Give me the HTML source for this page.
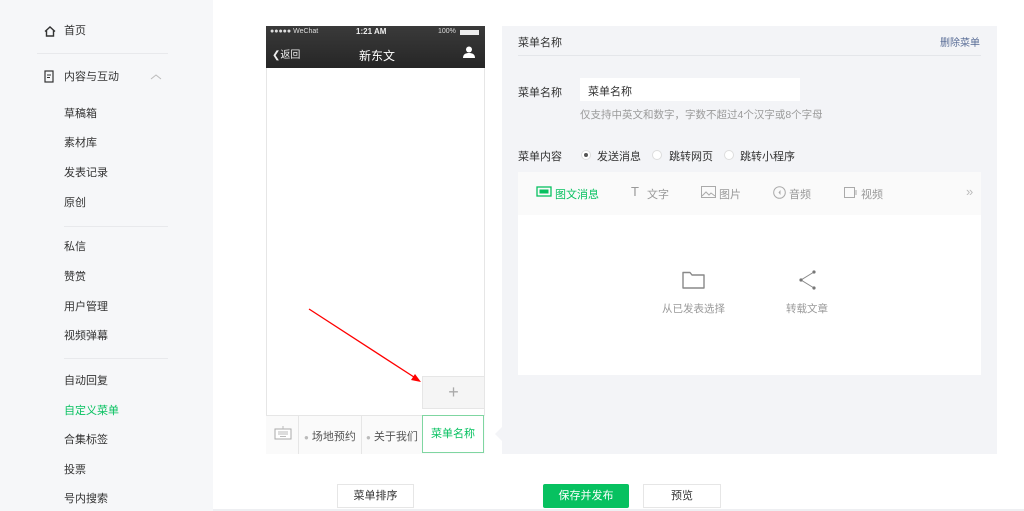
<!DOCTYPE html>
<html><head><meta charset="utf-8"><style>
*{margin:0;padding:0;box-sizing:border-box}
body{width:1024px;height:511px;overflow:hidden;background:#fff;font-family:"Liberation Sans","Noto Sans CJK SC",sans-serif;font-size:11px;color:#333;position:relative}
.a{position:absolute}
.side{left:0;top:0;width:213px;height:511px;background:#f6f7f9}
.si{left:64px;font-size:11px;color:#333;line-height:14px}
.dv{height:1px;background:#e8e9ec}
.gray{color:#9a9a9a}
</style></head><body>
<div class="a side"></div>
<svg class="a" style="left:43px;top:25px" width="14" height="13" viewBox="0 0 14 13"><path d="M2 6.5L7 2l5 4.5M3.5 5.5V11h7V5.5" fill="none" stroke="#333" stroke-width="1.4"/></svg>
<div class="a si" style="top:24px">首页</div>
<div class="a dv" style="left:37px;top:53px;width:131px"></div>
<svg class="a" style="left:44px;top:70px" width="10" height="13"><rect x="1" y="1" width="8" height="11" fill="none" stroke="#333" stroke-width="1.2"/><path d="M3 5h4M3 7.5h3" stroke="#333"/></svg>
<div class="a si" style="top:70px">内容与互动</div>
<svg class="a" style="left:150px;top:73px" width="12" height="8"><path d="M1 6l5-4 5 4" fill="none" stroke="#bbb"/></svg>
<div class="a si" style="top:107px">草稿箱</div>
<div class="a si" style="top:136px">素材库</div>
<div class="a si" style="top:166px">发表记录</div>
<div class="a si" style="top:196px">原创</div>
<div class="a dv" style="left:64px;top:226px;width:104px"></div>
<div class="a si" style="top:240px">私信</div>
<div class="a si" style="top:270px">赞赏</div>
<div class="a si" style="top:300px">用户管理</div>
<div class="a si" style="top:329px">视频弹幕</div>
<div class="a dv" style="left:64px;top:358px;width:104px"></div>
<div class="a si" style="top:374px">自动回复</div>
<div class="a si" style="top:404px;color:#07c160">自定义菜单</div>
<div class="a si" style="top:433px">合集标签</div>
<div class="a si" style="top:463px">投票</div>
<div class="a si" style="top:492px">号内搜索</div>

<!-- phone -->
<div class="a" style="left:266px;top:26px;width:219px;height:428px;border:1px solid #e6e6e6;background:#fff"></div>
<div class="a" style="left:266px;top:26px;width:219px;height:42px;background:linear-gradient(#3a3a3a,#262626)"></div>
<div class="a" style="left:270px;top:28px;font-size:7px;color:#ddd">●●●●● WeChat ︎</div>
<div class="a" style="left:356px;top:27px;font-size:8px;color:#eee;font-weight:bold">1:21 AM</div>
<div class="a" style="left:438px;top:28px;font-size:7px;color:#ddd">100%</div>
<div class="a" style="left:460px;top:30px;width:19px;height:5px;background:#eee"></div>
<div class="a" style="left:272px;top:46px;font-size:10px;color:#eee">❮返回</div>
<div class="a" style="left:359px;top:47px;font-size:12px;color:#fff">新东文</div>
<svg class="a" style="left:463px;top:46px" width="12" height="12"><circle cx="6" cy="3.5" r="3" fill="#fff"/><path d="M0 12c0-4 3-5 6-5s6 1 6 5z" fill="#fff"/></svg>
<!-- menu bar -->
<div class="a" style="left:266px;top:415px;width:219px;height:39px;background:#fafafa;border-top:1px solid #e6e6e6"></div>
<div class="a" style="left:298px;top:415px;width:1px;height:39px;background:#e6e6e6"></div>
<div class="a" style="left:361px;top:415px;width:1px;height:39px;background:#e6e6e6"></div>
<svg class="a" style="left:274px;top:426px" width="18" height="14"><rect x="1" y="3" width="16" height="10" fill="#fff" stroke="#aaa"/><path d="M4 6h10M4 8h10M6 10.5h6M9 0v3" stroke="#bbb"/></svg>
<div class="a" style="left:304px;top:428px;font-size:11px;color:#555"><span style="color:#bbb;font-size:8px">●</span> 场地预约</div>
<div class="a" style="left:366px;top:428px;font-size:11px;color:#555"><span style="color:#bbb;font-size:8px">●</span> 关于我们</div>
<div class="a" style="left:422px;top:415px;width:62px;height:38px;border:1px solid #7fd6a1;background:#fff;color:#07c160;font-size:11px;text-align:center;line-height:36px">菜单名称</div>
<div class="a" style="left:422px;top:376px;width:63px;height:33px;background:#f5f5f5;border:1px solid #e6e6e6;color:#aaa;font-size:18px;text-align:center;line-height:30px">+</div>
<svg class="a" style="left:300px;top:300px" width="130" height="90"><line x1="9" y1="9" x2="117" y2="79" stroke="#f00" stroke-width="1.3"/><path d="M121 82l-10-2 4-6z" fill="#f00"/></svg>

<!-- right panel -->
<div class="a" style="left:502px;top:26px;width:495px;height:428px;background:#f3f4f7"></div>
<svg class="a" style="left:494px;top:426px" width="9" height="16"><path d="M9 0L1 8l8 8z" fill="#f3f4f7"/></svg>
<div class="a" style="left:518px;top:34px;font-size:11px">菜单名称</div>
<div class="a" style="left:940px;top:34px;font-size:10px;color:#576b95">删除菜单</div>
<div class="a dv" style="left:518px;top:55px;width:463px;background:#e4e6ea"></div>
<div class="a" style="left:518px;top:84px">菜单名称</div>
<div class="a" style="left:580px;top:78px;width:220px;height:23px;background:#fff;padding:5px 8px">菜单名称</div>
<div class="a gray" style="left:580px;top:107px;font-size:10.5px">仅支持中英文和数字，字数不超过4个汉字或8个字母</div>
<div class="a" style="left:518px;top:148px">菜单内容</div>
<div class="a" style="left:581px;top:150px;width:10px;height:10px;border-radius:50%;background:#fff;border:1px solid #ddd"><div style="width:4px;height:4px;border-radius:50%;background:#555;margin:2px"></div></div>
<div class="a" style="left:597px;top:148px">发送消息</div>
<div class="a" style="left:652px;top:150px;width:10px;height:10px;border-radius:50%;background:#fff;border:1px solid #ddd"></div>
<div class="a" style="left:669px;top:148px">跳转网页</div>
<div class="a" style="left:724px;top:150px;width:10px;height:10px;border-radius:50%;background:#fff;border:1px solid #ddd"></div>
<div class="a" style="left:740px;top:148px">跳转小程序</div>
<div class="a" style="left:518px;top:172px;width:463px;height:203px;background:#fff"></div>
<div class="a" style="left:518px;top:172px;width:463px;height:43px;background:#fafafa"></div>
<svg class="a" style="left:536px;top:186px" width="16" height="12"><rect x="1" y="1" width="14" height="9" fill="none" stroke="#07c160" stroke-width="1.3"/><rect x="3.5" y="3.5" width="9" height="4" fill="#07c160"/></svg>
<div class="a" style="left:555px;top:186px;color:#07c160">图文消息</div>
<div class="a" style="left:631px;top:184px;color:#999;font-size:13px">T</div>
<div class="a" style="left:647px;top:186px;color:#999">文字</div>
<svg class="a" style="left:701px;top:186px" width="15" height="12"><rect x="0.5" y="0.5" width="14" height="11" fill="none" stroke="#aaa"/><path d="M1 10l4-4 3 3 2-2 4 3" fill="none" stroke="#aaa"/></svg>
<div class="a" style="left:719px;top:186px;color:#999">图片</div>
<svg class="a" style="left:773px;top:186px" width="13" height="13"><circle cx="6.5" cy="6.5" r="5.8" fill="none" stroke="#aaa"/><path d="M7.5 4v5L5.5 6.5z" fill="#aaa"/></svg>
<div class="a" style="left:789px;top:186px;color:#999">音频</div>
<svg class="a" style="left:844px;top:187px" width="15" height="11"><rect x="0.5" y="0.5" width="10" height="10" fill="none" stroke="#aaa"/><path d="M12 3v5" stroke="#aaa"/></svg>
<div class="a" style="left:861px;top:186px;color:#999">视频</div>
<div class="a" style="left:966px;top:184px;color:#bbb;font-size:13px">»</div>
<svg class="a" style="left:682px;top:270px" width="23" height="19"><path d="M1 2.5h7l2 2.5h12v13H1z" fill="none" stroke="#888" stroke-width="1.4" stroke-linejoin="round"/></svg>
<div class="a gray" style="left:662px;top:301px;font-size:10.5px">从已发表选择</div>
<svg class="a" style="left:797px;top:269px" width="20" height="22"><path d="M17 3L4 11l13 8" fill="none" stroke="#888"/><circle cx="17" cy="3" r="1.6" fill="#777"/><circle cx="4" cy="11" r="1.6" fill="#777"/><circle cx="17" cy="19" r="1.6" fill="#777"/></svg>
<div class="a gray" style="left:786px;top:301px;font-size:10.5px">转载文章</div>

<!-- bottom buttons -->
<div class="a" style="left:337px;top:484px;width:77px;height:24px;border:1px solid #e6e6e6;background:#fff;text-align:center;line-height:22px">菜单排序</div>
<div class="a" style="left:543px;top:484px;width:86px;height:24px;background:#07c160;color:#fff;text-align:center;line-height:24px;border-radius:2px">保存并发布</div>
<div class="a" style="left:643px;top:484px;width:78px;height:24px;border:1px solid #e6e6e6;background:#fff;text-align:center;line-height:22px">预览</div>
<div class="a" style="left:213px;top:509px;width:811px;height:2px;background:#eeeff2"></div>
</body></html>
